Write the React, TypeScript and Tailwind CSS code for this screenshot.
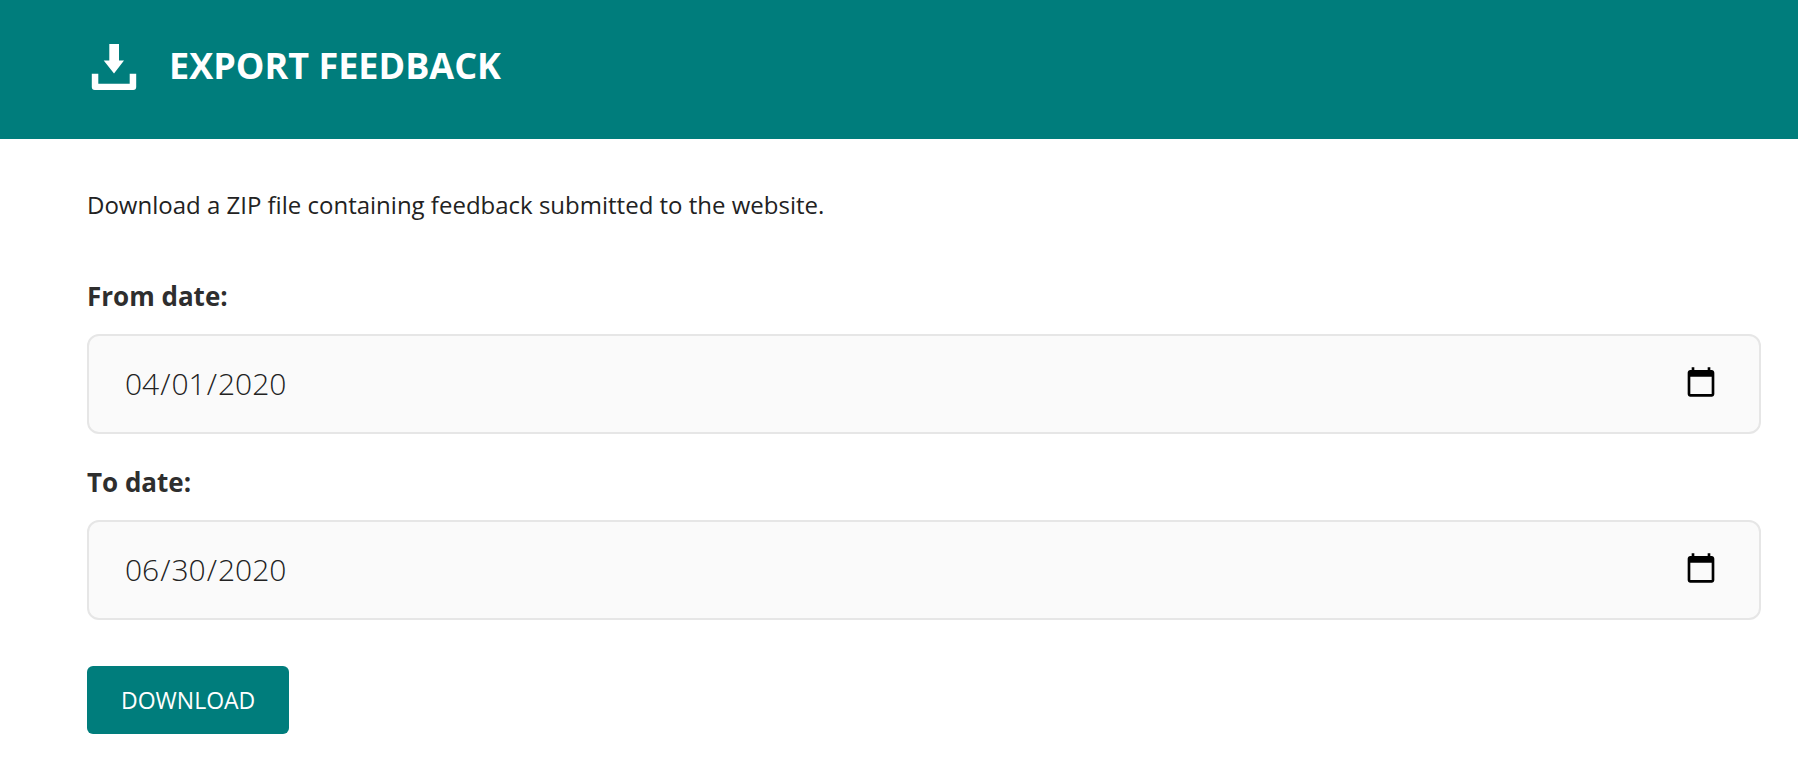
function DownloadIcon() {
  return (
    <svg width="46" height="46" viewBox="0 0 46 46" fill="#fff" aria-hidden="true">
      <path d="M18.3 0H28v16.5h5L23 29.5 12.7 16.5h5.6z" />
      <path d="M.8 29.7h6.5v10h31.4v-10h6.5V43q0 3-3 3H3.8q-3 0-3-3z" />
    </svg>
  );
}

function DateField({ id, label, value }: { id: string; label: string; value: string }) {
  return (
    <div>
      <label htmlFor={id} className="block text-[26px] leading-9 font-bold text-[#2e2e2e]">{label}</label>
      <input
        id={id}
        type="date"
        defaultValue={value}
        className="mt-5 block h-[100px] w-full rounded-xl border-2 border-[#e6e6e6] bg-[#fafafa] pr-[39px] pb-0.5 pl-[35px] text-[30px] font-light text-[#222] [&::-webkit-calendar-picker-indicator]:h-[34px] [&::-webkit-calendar-picker-indicator]:w-[34px]"
      />
    </div>
  );
}

export default function App() {
  return (
    <div className="min-h-screen bg-white font-['Open_Sans',sans-serif]">
      <header className="flex h-[139px] items-center gap-8 bg-[#007d7c] pb-1.5 pl-[91px]">
        <DownloadIcon />
        <h1 className="pb-0.5 text-4xl font-bold text-white">EXPORT FEEDBACK</h1>
      </header>
      <main className="pt-12 pr-[37px] pl-[87px]">
        <p className="text-2xl leading-9 text-[#222]">Download a ZIP file containing feedback submitted to the website.</p>
        <form className="mt-[55px] flex flex-col gap-[30px]">
          <DateField id="from" label="From date:" value="2020-04-01" />
          <DateField id="to" label="To date:" value="2020-06-30" />
          <button type="button" className="mt-4 h-[68px] self-start rounded-md bg-[#007d7c] px-[34px] text-[23px] text-white">DOWNLOAD</button>
        </form>
      </main>
    </div>
  );
}
